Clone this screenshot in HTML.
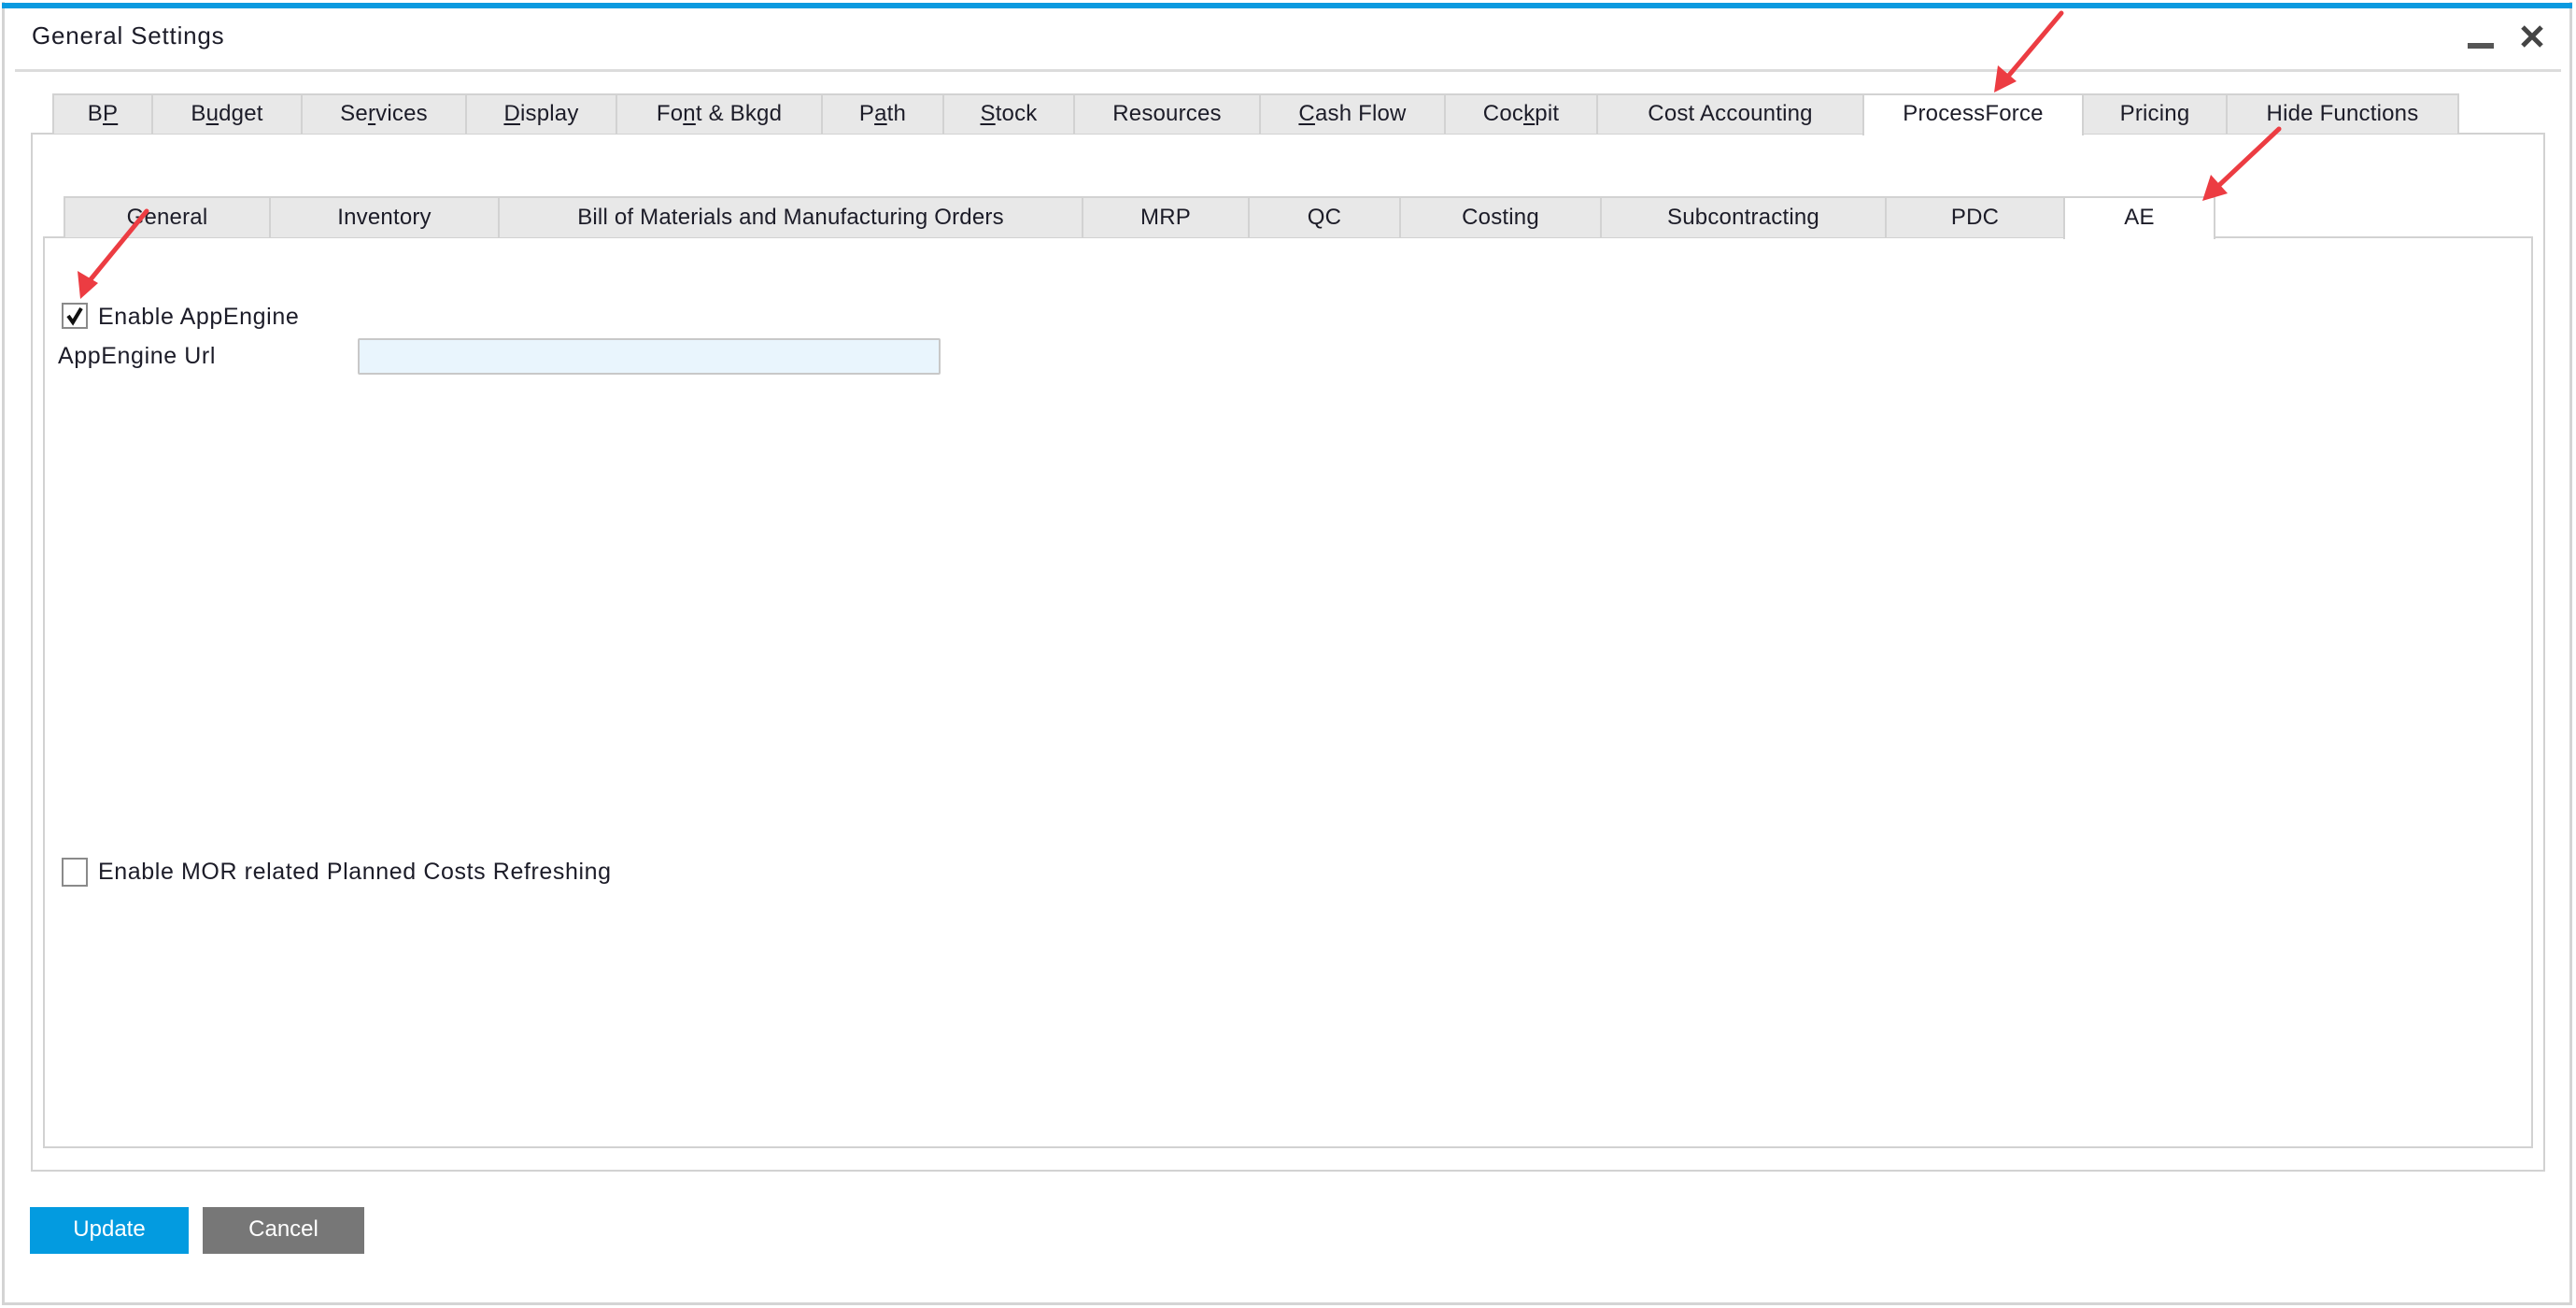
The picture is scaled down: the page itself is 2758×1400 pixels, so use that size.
<!DOCTYPE html>
<html><head><meta charset="utf-8"><style>
*{margin:0;padding:0;box-sizing:border-box}
body{width:2758px;height:1400px;background:#fff;position:relative;overflow:hidden;font-family:"Liberation Sans",sans-serif;color:#1c1c28}
.a{position:absolute}
.tab{position:absolute;background:#e8e8e8;border:2px solid #d2d2d2;border-bottom:none;font-size:24px;text-align:center;white-space:nowrap;letter-spacing:0.2px}
.tab.on{background:#fff}
.t1{top:100px;height:43px;line-height:40px}
.t2{top:210px;height:44px;line-height:42px}
.lbl{position:absolute;font-size:25px;white-space:nowrap;letter-spacing:0.6px}
u{text-decoration-thickness:2px;text-underline-offset:3px}
</style></head><body>
<div class="a" style="left:2px;top:2px;width:2752px;height:1395px;border:3px solid #d4d4d4;border-top:none"></div>
<div class="a" style="left:2px;top:3px;width:2752px;height:6px;background:#0a9ae0"></div>
<div class="lbl" style="left:34px;top:23px;font-size:26px;letter-spacing:0.8px">General Settings</div>
<div class="a" style="left:2642px;top:46px;width:28px;height:6px;background:#555"></div>
<svg class="a" style="left:2698px;top:26px" width="26" height="26"><path d="M3 3L23 23M23 3L3 23" stroke="#444" stroke-width="5"/></svg>
<div class="a" style="left:16px;top:74px;width:2726px;height:3px;background:#dcdcdc"></div>

<div class="a" style="left:33px;top:142px;width:2692px;height:1112px;border:2px solid #d2d2d2"></div>
<div class="tab t1" style="left:56px;width:108px">B<u>P</u></div>
<div class="tab t1" style="left:162px;width:162px">B<u>u</u>dget</div>
<div class="tab t1" style="left:322px;width:178px">Se<u>r</u>vices</div>
<div class="tab t1" style="left:498px;width:163px"><u>D</u>isplay</div>
<div class="tab t1" style="left:659px;width:222px">Fo<u>n</u>t &amp; Bkgd</div>
<div class="tab t1" style="left:879px;width:132px">P<u>a</u>th</div>
<div class="tab t1" style="left:1009px;width:142px"><u>S</u>tock</div>
<div class="tab t1" style="left:1149px;width:201px">Resources</div>
<div class="tab t1" style="left:1348px;width:200px"><u>C</u>ash Flow</div>
<div class="tab t1" style="left:1546px;width:165px">Coc<u>k</u>pit</div>
<div class="tab t1" style="left:1709px;width:287px">Cost Accounting</div>
<div class="tab t1 on" style="left:1994px;width:237px;height:45px">ProcessForce</div>
<div class="tab t1" style="left:2229px;width:156px">Pricing</div>
<div class="tab t1" style="left:2383px;width:250px">Hide Functions</div>

<div class="a" style="left:46px;top:253px;width:2666px;height:976px;border:2px solid #d2d2d2"></div>
<div class="tab t2" style="left:68px;width:222px">General</div>
<div class="tab t2" style="left:288px;width:247px">Inventory</div>
<div class="tab t2" style="left:533px;width:627px">Bill of Materials and Manufacturing Orders</div>
<div class="tab t2" style="left:1158px;width:180px">MRP</div>
<div class="tab t2" style="left:1336px;width:164px">QC</div>
<div class="tab t2" style="left:1498px;width:217px">Costing</div>
<div class="tab t2" style="left:1713px;width:307px">Subcontracting</div>
<div class="tab t2" style="left:2018px;width:193px">PDC</div>
<div class="tab t2 on" style="left:2209px;width:163px;height:46px">AE</div>

<div class="a" style="left:66px;top:324px;width:28px;height:28px;border:2px solid #8a8a8a;background:#fff"></div>
<svg class="a" style="left:68px;top:326px" width="24" height="24"><path d="M5 12L10 19L19 4" fill="none" stroke="#111" stroke-width="4"/></svg>
<div class="lbl" style="left:105px;top:325px">Enable AppEngine</div>
<div class="lbl" style="left:62px;top:367px">AppEngine Url</div>
<div class="a" style="left:383px;top:362px;width:624px;height:39px;background:#e9f5fd;border:2px solid #c8c8c8;border-radius:2px"></div>

<div class="a" style="left:66px;top:918px;width:28px;height:31px;border:2px solid #8a8a8a;background:#fff"></div>
<div class="lbl" style="left:105px;top:919px">Enable MOR related Planned Costs Refreshing</div>

<div class="a" style="left:32px;top:1292px;width:170px;height:50px;background:#039be0;color:#fff;font-size:24px;text-align:center;line-height:48px">Update</div>
<div class="a" style="left:217px;top:1292px;width:173px;height:50px;background:#777;color:#fff;font-size:24px;text-align:center;line-height:48px">Cancel</div>

<svg class="a" style="left:0;top:0" width="2758" height="1400">
<g stroke="#ec3c42" stroke-width="5" stroke-linecap="round" fill="#ec3c42">
<line x1="2207" y1="14" x2="2148" y2="84"/>
<line x1="2440" y1="138" x2="2373" y2="201"/>
<line x1="157" y1="226" x2="93" y2="304"/>
</g>
<g fill="#ec3c42">
<polygon points="2135,99 2139,70 2159,87"/>
<polygon points="2358,215 2367,187 2385,207"/>
<polygon points="86,320 83,290 105,303"/>
</g>
</svg>
</body></html>
